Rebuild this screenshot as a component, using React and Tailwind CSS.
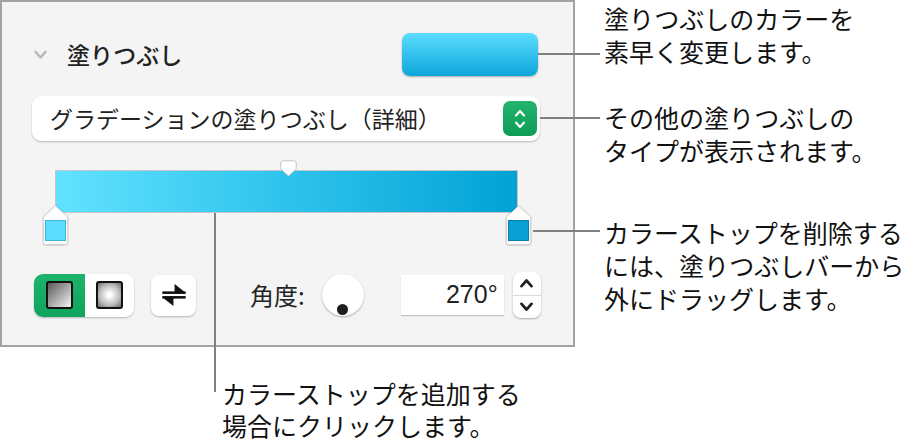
import React from "react";

const jp = { fontFamily: '"Noto Sans CJK JP", "Noto Sans", sans-serif' };

function Chevron({ up, className, color = "currentColor", width = 2 }) {
  return (
    <svg viewBox="0 0 12 8" className={className} fill="none" stroke={color} strokeWidth={width} strokeLinecap="round" strokeLinejoin="round">
      {up ? <path d="M2 6.5 L6 2 L10 6.5" /> : <path d="M2 1.5 L6 6 L10 1.5" />}
    </svg>
  );
}

function Stop({ color, border, className }) {
  return (
    <svg viewBox="0 0 27 41" className={className}>
      <defs>
        <filter id={"sh" + color.slice(1)} x="-30%" y="-30%" width="160%" height="160%">
          <feDropShadow dx="0" dy="0.5" stdDeviation="0.8" floodColor="#000" floodOpacity="0.3" />
        </filter>
      </defs>
      <path
        d="M13.5 1 L25.5 12 L25.5 37 Q25.5 39.5 23 39.5 L4 39.5 Q1.5 39.5 1.5 37 L1.5 12 Z"
        fill="#fff"
        stroke="#d2d2d2"
        strokeWidth="0.8"
        filter={"url(#sh" + color.slice(1) + ")"}
      />
      <rect x="3.5" y="15.5" width="20" height="20" fill={color} stroke={border} strokeWidth="1" />
    </svg>
  );
}

function GradientEditor() {
  return (
    <div className="relative ml-[53px] mt-[29px] h-[43px] w-[463px]">
      <div className="h-full w-full border border-[#c6c6c6] bg-[linear-gradient(to_right,#62e2ff,#33c6ee_45%,#02a2d6)]" />
      <svg viewBox="0 0 17 17" className="absolute left-[225px] top-[-10px] h-[17px] w-[17px]">
        <path d="M3 0.8 L14 0.8 Q16.2 0.8 16.2 3 L16.2 9 L8.5 16 L0.8 9 L0.8 3 Q0.8 0.8 3 0.8 Z" fill="#fff" stroke="#bdbdbd" strokeWidth="0.9" />
      </svg>
      <Stop color="#5cdcfe" border="#3fb3d6" className="absolute left-[-13px] top-[35px] h-[41px] w-[27px]" />
      <Stop color="#0aa0d4" border="#0780ad" className="absolute left-[450px] top-[35px] h-[41px] w-[27px]" />
    </div>
  );
}

function BottomRow() {
  return (
    <div className="mt-[58px] flex h-[48px] items-center pl-[32px]">
      <div className="flex h-[43px] w-[100px] overflow-hidden rounded-[9px] shadow-[0_1px_2px_rgba(0,0,0,0.25)]">
        <div className="flex w-[51px] items-center justify-center bg-[linear-gradient(to_bottom,#1cb36c,#10a45c)]">
          <div className="h-[28px] w-[27px] rounded-[3px] border-2 border-[#111] bg-[linear-gradient(135deg,#5a5a5a,#f4f4f4)]" />
        </div>
        <div className="flex flex-1 items-center justify-center bg-white">
          <div className="h-[28px] w-[27px] rounded-[3px] border-2 border-[#111] bg-[radial-gradient(circle,#ffffff_10%,#bdbdbd_60%,#6a6a6a_100%)]" />
        </div>
      </div>
      <div className="ml-[17px] flex h-[41px] w-[45px] items-center justify-center rounded-[8px] bg-white shadow-[0_1px_2px_rgba(0,0,0,0.25)]">
        <svg viewBox="0 0 24 24" className="h-[28px] w-[28px]">
          <path d="M2 10 H22" stroke="#111" strokeWidth="2.2" />
          <path d="M12.5 2.5 L12.5 10 L22 10 Z" fill="#111" />
          <path d="M2 14 H22" stroke="#111" strokeWidth="2.2" />
          <path d="M2 14 L11.5 14 L11.5 21.5 Z" fill="#111" />
        </svg>
      </div>
      <span className="ml-[54px] text-[24px] leading-none text-[#222]" style={jp}>
        角度:
      </span>
      <div className="relative ml-[17px] h-[42px] w-[42px] rounded-full bg-white shadow-[0_1px_2px_rgba(0,0,0,0.3)]">
        <div className="absolute left-[15px] top-[30px] h-[11px] w-[11px] rounded-full bg-[#1e1e1e]" />
      </div>
      <div
        className="ml-[37px] flex h-[40px] w-[103px] items-center justify-end bg-white pr-[6px] text-[25px] text-[#222] shadow-[0_1px_1px_rgba(0,0,0,0.2)]"
        style={{ fontFamily: '"Liberation Sans", Arial, sans-serif' }}
      >
        270°
      </div>
      <div className="ml-[9px] flex h-[46px] w-[28px] flex-col items-center rounded-[8px] bg-white shadow-[0_1px_2px_rgba(0,0,0,0.3)]">
        <div className="flex flex-1 items-center justify-center">
          <Chevron up className="h-[10px] w-[15px]" color="#222" width={2.2} />
        </div>
        <div className="h-px w-full bg-[#dcdcdc]" />
        <div className="flex flex-1 items-center justify-center">
          <Chevron className="h-[10px] w-[15px]" color="#222" width={2.2} />
        </div>
      </div>
    </div>
  );
}

function Panel() {
  return (
    <div className="h-[347px] w-[575px] shrink-0 border-2 border-[#a3a3a3] bg-[#f4f4f4]">
      <div className="ml-[30px] mr-[35px] mt-[31px] flex h-[43px] items-center">
        <Chevron className="ml-[1px] h-[10px] w-[15px]" color="#b9b9b9" />
        <span className="ml-[19px] text-[23px] font-medium text-[#222]" style={jp}>
          塗りつぶし
        </span>
        <div className="ml-auto h-[43px] w-[136px] rounded-[8px] bg-[linear-gradient(to_bottom,#5ddcff,#0ba6da)] shadow-[0_1px_2px_rgba(0,0,0,0.3)]" />
      </div>
      <div className="ml-[30px] mr-[33px] mt-[20px] flex h-[45px] items-center rounded-[9px] bg-white pl-[18px] pr-[3px] shadow-[0_1px_2px_rgba(0,0,0,0.25)]">
        <span className="text-[23px] text-[#222]" style={jp}>
          グラデーションの塗りつぶし（詳細）
        </span>
        <div className="ml-auto flex h-[35px] w-[34px] flex-col items-center justify-center gap-[4px] rounded-[7px] bg-[linear-gradient(to_bottom,#24b46e,#0e9c56)]">
          <Chevron up className="h-[8px] w-[12px]" color="#fff" />
          <Chevron className="h-[8px] w-[12px]" color="#fff" />
        </div>
      </div>
      <GradientEditor />
      <BottomRow />
    </div>
  );
}

export default function App() {
  return (
    <div className="relative h-[447px] w-[923px] overflow-hidden bg-white text-[#111]" style={jp}>
      <div className="flex">
        <Panel />
        <div className="ml-[29px] pt-[2px] text-[25px] leading-[33px]">
          <p>
            塗りつぶしのカラーを
            <br />
            素早く変更します。
          </p>
          <p className="mt-[33px]">
            その他の塗りつぶしの
            <br />
            タイプが表示されます。
          </p>
          <p className="mt-[49px]">
            カラーストップを削除する
            <br />
            には、塗りつぶしバーから
            <br />
            外にドラッグします。
          </p>
        </div>
      </div>
      <p className="ml-[222px] mt-[30px] text-[25px] leading-[32px]">
        カラーストップを追加する
        <br />
        場合にクリックします。
      </p>

      {/* leader lines */}
      <div className="absolute left-[538px] top-[53px] h-[2px] w-[62px] bg-[#808080]" />
      <div className="absolute left-[540px] top-[117px] h-[2px] w-[60px] bg-[#808080]" />
      <div className="absolute left-[533px] top-[230px] h-[2px] w-[67px] bg-[#808080]" />
      <div className="absolute left-[214px] top-[213px] h-[179px] w-[2px] bg-[#808080]" />
    </div>
  );
}
